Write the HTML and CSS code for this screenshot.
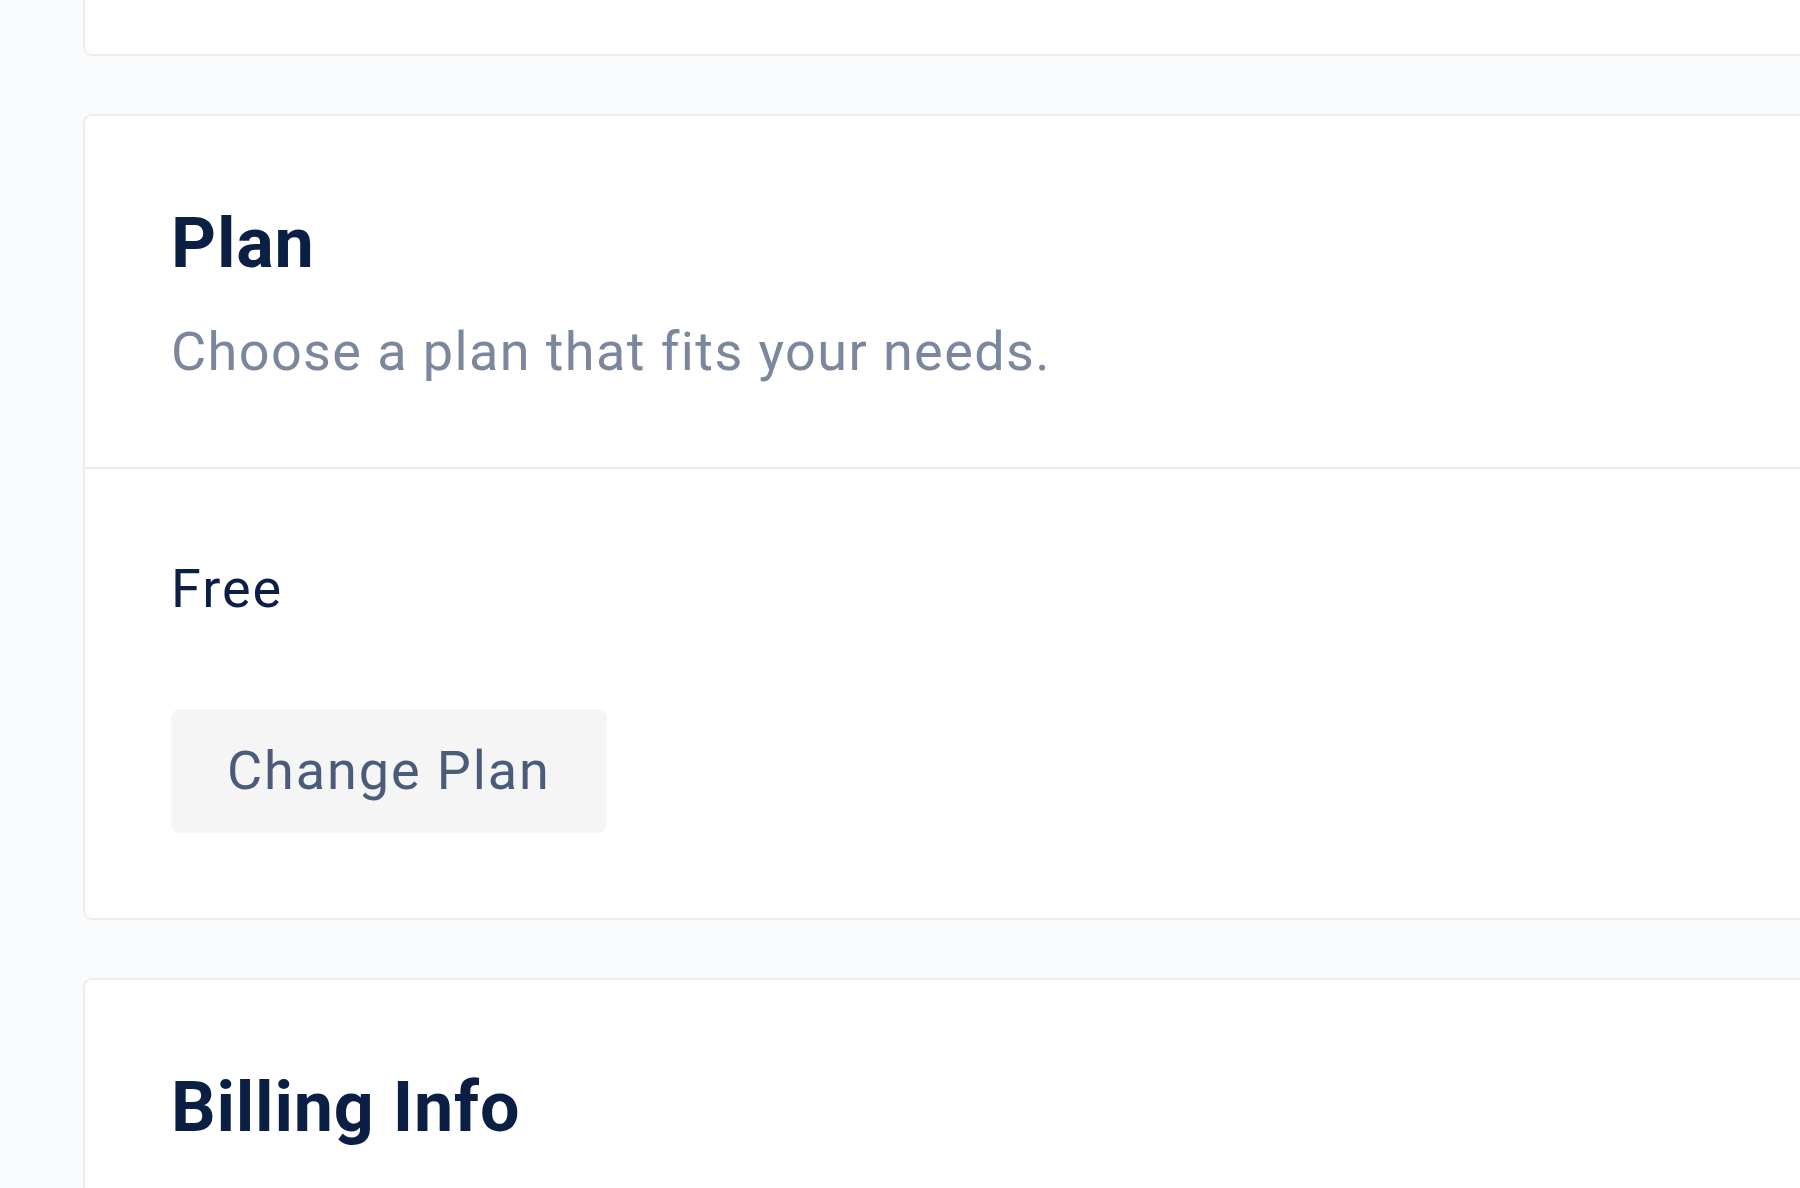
FILE: index.html
```html
<!DOCTYPE html>
<html lang="en">
<head>
<meta charset="utf-8">
<title>Plan</title>
<link rel="stylesheet" href="styles.css">
</head>
<body>
<main class="page">
  <section class="card card-top"></section>

  <section class="card">
    <header class="card-header">
      <h2 class="card-title">Plan</h2>
      <p class="card-subtitle">Choose a plan that fits your needs.</p>
    </header>
    <div class="card-body">
      <p class="plan-name">Free</p>
      <button class="btn" type="button">Change Plan</button>
    </div>
  </section>

  <section class="card">
    <header class="card-header">
      <h2 class="card-title">Billing Info</h2>
    </header>
  </section>
</main>
</body>
</html>
```

FILE: styles.css
```css
html, body {
  margin: 0;
  padding: 0;
  background: #f9fafb;
  overflow: hidden;
  height: 100%;
}

body {
  font-family: Roboto, "Liberation Sans", sans-serif;
  color: #0b1f44;
}

.page {
  display: flex;
  flex-direction: column;
  gap: 58px;
  padding-left: 83px;
  width: 1900px;
  margin-top: -40px;
}

.card {
  background: #ffffff;
  border: 2px solid #ebecf0;
  border-radius: 9px;
}

.card-top {
  height: 92px;
}

.card-header {
  padding: 91px 86px 75px;
  border-bottom: 2px solid #ebecf0;
}

.card-title {
  margin: 0;
  font-size: 70px;
  line-height: 72px;
  font-weight: 700;
  letter-spacing: 0.8px;
  color: #0b1f44;
}

.card-subtitle {
  margin: 32px 0 0;
  font-size: 54px;
  line-height: 81px;
  letter-spacing: 1.4px;
  color: #7b879d;
}

.card-body {
  padding: 79px 86px 85px;
}

.plan-name {
  margin: 0 0 80px;
  font-size: 54px;
  line-height: 81px;
  letter-spacing: 2px;
  color: #0b1f44;
}

.btn {
  display: inline-block;
  font-family: inherit;
  font-size: 54px;
  line-height: 81px;
  letter-spacing: 1.9px;
  padding: 21px 56px 22px;
  border: 0;
  border-radius: 9px;
  background: #f5f5f5;
  color: #4b5b7a;
}
```
